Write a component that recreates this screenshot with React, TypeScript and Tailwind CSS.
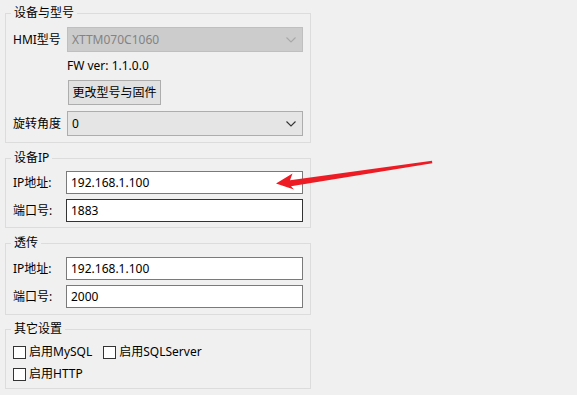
import React from "react";

const font = { fontFamily: '"Noto Sans", "Noto Sans CJK SC", sans-serif' };

function Chevron({ color }: { color: string }) {
  return (
    <svg width="10" height="6" viewBox="0 0 10 6" className="shrink-0">
      <path d="M0.5 0.5 L5 5 L9.5 0.5" fill="none" stroke={color} strokeWidth="1.1" />
    </svg>
  );
}

function Group({ title, children, className }: { title: string; children: React.ReactNode; className?: string }) {
  return (
    <fieldset className={`w-[306px] border border-[#dcdcdc] px-[7px] ${className ?? ""}`}>
      <legend className="-ml-[2px] px-[3px] text-[12px] leading-[16px] text-black">{title}</legend>
      {children}
    </fieldset>
  );
}

function TextRow({ label, value, dark }: { label: string; value: string; dark?: boolean }) {
  return (
    <div className="flex items-center">
      <span className="w-[53px] shrink-0 text-[12px] leading-[16px] text-black">{label}</span>
      <div
        className={`flex h-[23px] w-[237px] items-center border bg-white pl-[4px] text-[12px] text-black ${
          dark ? "border-[#333333]" : "border-[#7a7a7a]"
        }`}
      >
        {value}
      </div>
    </div>
  );
}

function Check({ label }: { label: string }) {
  return (
    <div className="flex items-center">
      <div className="h-[13px] w-[13px] border border-[#333333] bg-white" />
      <span className="ml-[3px] text-[12px] leading-[16px] text-black">{label}</span>
    </div>
  );
}

export default function App() {
  return (
    <div className="relative h-[395px] w-[577px] overflow-hidden bg-[#f0f0f0]" style={font}>
      <div className="flex flex-col pl-[5px] pt-[5px]">
        <Group title="设备与型号" className="pb-[6px] pt-[6px]">
          <div className="flex items-center">
            <span className="w-[54px] shrink-0 text-[12px] leading-[16px] text-black">HMI型号</span>
            <div className="flex h-[25px] w-[236px] items-center justify-between border border-[#bfbfbf] bg-[#cccccc] pl-[4px] pr-[6px] text-[12px] text-[#838383]">
              <span>XTTM070C1060</span>
              <Chevron color="#a8a8a8" />
            </div>
          </div>
          <div className="ml-[54px] mt-[6px] text-[12px] leading-[16px] text-black">FW ver: 1.1.0.0</div>
          <div className="ml-[55px] mt-[6px] flex h-[25px] w-[93px] items-center justify-center border border-[#adadad] bg-[#e1e1e1] text-[12px] text-black">
            更改型号与固件
          </div>
          <div className="mt-[6px] flex items-center">
            <span className="w-[54px] shrink-0 text-[12px] leading-[16px] text-black">旋转角度</span>
            <div className="flex h-[25px] w-[236px] items-center justify-between border border-[#adadad] bg-[#e5e5e5] pl-[4px] pr-[6px] text-[12px] text-black">
              <span>0</span>
              <Chevron color="#333333" />
            </div>
          </div>
        </Group>

        <Group title="设备IP" className="mt-[7px] pb-[5px] pt-[5px]">
          <div className="flex flex-col gap-[5px]">
            <TextRow label="IP地址:" value="192.168.1.100" />
            <TextRow label="端口号:" value="1883" dark />
          </div>
        </Group>

        <Group title="透传" className="mt-[7px] pb-[6px] pt-[6px]">
          <div className="flex flex-col gap-[5px]">
            <TextRow label="IP地址:" value="192.168.1.100" />
            <TextRow label="端口号:" value="2000" />
          </div>
        </Group>

        <Group title="其它设置" className="mt-[6px] pb-[6px] pt-[7px]">
          <div className="flex flex-col gap-[6px]">
            <div className="flex items-center gap-[11px]">
              <Check label="启用MySQL" />
              <Check label="启用SQLServer" />
            </div>
            <Check label="启用HTTP" />
          </div>
        </Group>
      </div>

      <svg className="pointer-events-none absolute left-0 top-0" width="577" height="395" viewBox="0 0 577 395">
        <path
          d="M276 183.5 L292.5 173.5 L290 180.2 L432 160.8 L432.3 163.2 L291 186.2 L294 189.5 Z"
          fill="#ed1c24"
        />
      </svg>
    </div>
  );
}
